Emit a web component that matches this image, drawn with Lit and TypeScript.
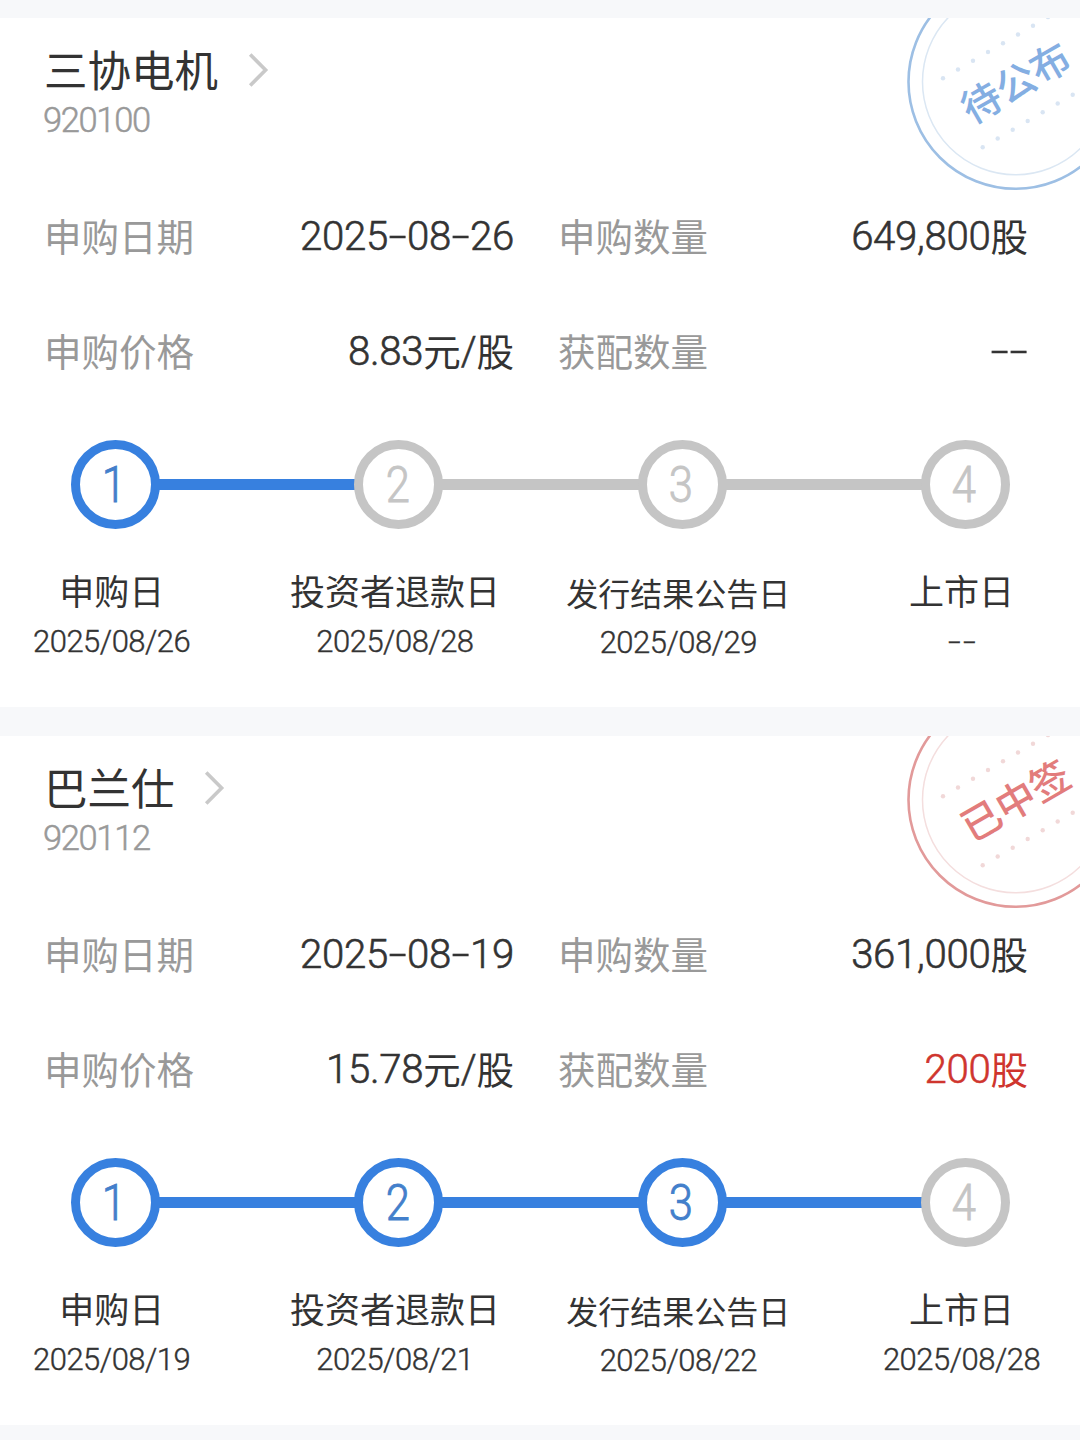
import { LitElement, html, css, svg } from "lit";
import { customElement, property } from "lit/decorators.js";
import { classMap } from "lit/directives/class-map.js";

interface Step {
  label: string;
  date: string;
  done: boolean;
}

interface Subscription {
  name: string;
  code: string;
  status: string;
  tone: "blue" | "red";
  date: string;
  amount: string;
  price: string;
  allotted: string;
  won: boolean;
  steps: Step[];
}

const ITEMS: Subscription[] = [
  {
    name: "三协电机",
    code: "920100",
    status: "待公布",
    tone: "blue",
    date: "2025-08-26",
    amount: "649,800股",
    price: "8.83元/股",
    allotted: "--",
    won: false,
    steps: [
      { label: "申购日", date: "2025/08/26", done: true },
      { label: "投资者退款日", date: "2025/08/28", done: false },
      { label: "发行结果公告日", date: "2025/08/29", done: false },
      { label: "上市日", date: "--", done: false },
    ],
  },
  {
    name: "巴兰仕",
    code: "920112",
    status: "已中签",
    tone: "red",
    date: "2025-08-19",
    amount: "361,000股",
    price: "15.78元/股",
    allotted: "200股",
    won: true,
    steps: [
      { label: "申购日", date: "2025/08/19", done: true },
      { label: "投资者退款日", date: "2025/08/21", done: true },
      { label: "发行结果公告日", date: "2025/08/22", done: true },
      { label: "上市日", date: "2025/08/28", done: false },
    ],
  },
];

// Hyphens are drawn wider than the font's own glyph.
const dashed = (text: string) =>
  text.split(/(-)/).filter(Boolean).map((part) => (part === "-" ? html`<span class="dash">-</span>` : part));

@customElement("status-stamp")
export class StatusStamp extends LitElement {
  @property() text = "";
  @property() tone = "blue";

  static styles = css`
    :host { display: block; width: 180px; height: 180px; overflow: hidden; }
    svg { display: block; }
    .blue { --line: #9dbfe4; --thin: #dbe7f3; --dot: #d9e5f3; --ink: #84aee2; }
    .red { --line: #e29a9a; --thin: #f4dede; --dot: #f1d8d8; --ink: #e27c7c; }
    .outer { fill: none; stroke: var(--line); stroke-width: 2.6; }
    .inner { fill: none; stroke: var(--thin); stroke-width: 1.5; }
    .dot { fill: var(--dot); }
    .word {
      fill: var(--ink);
      font: 500 39.5px/1 "Noto Sans CJK SC", sans-serif;
      text-anchor: middle;
    }
  `;

  private dots(x: number, y: number, count: number) {
    return Array.from({ length: count }, (_, i) =>
      svg`<circle class="dot" cx=${x + i * 15} cy=${y - i * 8.75} r="2.2"></circle>`);
  }

  render() {
    return html`<svg class=${this.tone} width="180" height="180" viewBox="0 0 180 180">
      <circle class="outer" cx="115.5" cy="63.8" r="107"></circle>
      <circle class="inner" cx="115.5" cy="63.8" r="93"></circle>
      ${this.dots(43, 60.3, 9)}
      ${this.dots(82.7, 129.3, 8)}
      <text class="word" transform="translate(115.5 64.5) rotate(-30)" x="0" y="15">${this.text}</text>
    </svg>`;
  }
}

@customElement("step-track")
export class StepTrack extends LitElement {
  @property({ attribute: false }) steps: Step[] = [];

  static styles = css`
    :host { display: block; }
    .track { display: flex; align-items: center; padding: 0 70px 0 71px; }
    .node {
      box-sizing: border-box; width: 89px; height: 89px; flex: none;
      border: 9px solid #c5c5c5; border-radius: 50%;
      display: flex; align-items: center; justify-content: center;
      font-size: 49.5px; line-height: 71px; font-weight: 300; color: #c5c5c5;
      -webkit-text-stroke: 0.9px currentColor;
    }
    .digit { transform: scaleX(0.88); padding: 2px 3px 0 0; }
    .node.done { border-color: #3780df; color: #437fcb; }
    .line { flex: 1; height: 11px; margin: 0 -2px; background: #c5c5c5; }
    .line.done { background: #3780df; }
    .captions {
      display: grid; grid-template-columns: repeat(4, 283.3px);
      margin: 40px 0 0 -30px; text-align: center; color: #333;
    }
    .label { font-size: 35px; line-height: 50px; white-space: nowrap; }
    .label.long { font-size: 32px; padding-top: 2px; line-height: 48px; }
    .date {
      margin-top: -2px; font-size: 31px; line-height: 50px; letter-spacing: -0.5px;
      font-weight: 300; -webkit-text-stroke: 0.4px currentColor;
    }
    .long + .date { padding-top: 1px; }
    .dash { display: inline-block; width: 15px; transform: scaleX(1.45); letter-spacing: 0; }
  `;

  render() {
    return html`
      <div class="track">
        ${this.steps.map((s, i) => html`
          ${i ? html`<div class=${classMap({ line: true, done: this.steps[i - 1].done })}></div>` : ""}
          <div class=${classMap({ node: true, done: s.done })}><span class="digit">${i + 1}</span></div>`)}
      </div>
      <div class="captions">
        ${this.steps.map((s) => html`<div>
          <div class=${classMap({ label: true, long: s.label.length > 6 })}>${s.label}</div>
          <div class="date">${dashed(s.date)}</div>
        </div>`)}
      </div>`;
  }
}

@customElement("subscription-card")
export class SubscriptionCard extends LitElement {
  @property({ attribute: false }) item!: Subscription;

  static styles = css`
    :host {
      display: block; position: relative; box-sizing: border-box;
      height: 689px; padding-top: 24px; overflow: hidden; background: #fff;
    }
    .head { padding-left: 44px; }
    .title { display: flex; align-items: center; gap: 29.5px; height: 56px; }
    .name { font-size: 43.5px; line-height: 56px; padding-top: 5px; color: #333; }
    .code {
      font-size: 34.5px; line-height: 44px; letter-spacing: -1.35px; margin-left: -1px;
      font-weight: 300; -webkit-text-stroke: 0.5px currentColor; color: #999;
    }
    .facts {
      display: grid; grid-template-columns: 470px 470px; column-gap: 44px; row-gap: 55px;
      padding: 65px 52px 58px 44px;
    }
    .fact { display: flex; justify-content: space-between; height: 60px; line-height: 60px; }
    .key { font-size: 37.5px; padding-top: 1px; color: #999; }
    .value {
      font-size: 40.2px; color: #333; letter-spacing: -0.3px;
      font-weight: 300; -webkit-text-stroke: 0.6px currentColor;
    }
    .unit { font-size: 37.5px; letter-spacing: 0; font-weight: 400; -webkit-text-stroke: 0; position: relative; top: 1px; }
    .won { color: #cf352e; }
    .dash { display: inline-block; width: 19px; text-align: center; transform: scaleX(1.6); }
    .stamp { position: absolute; top: 0; right: 0; }
  `;

  private fact(key: string, value: string, won = false) {
    const parts = value.split(/([元股])/).filter(Boolean);
    return html`<div class="fact">
      <span class="key">${key}</span>
      <span class=${classMap({ value: true, won })}>${parts.map((p) =>
        /[元股]/.test(p) ? html`<span class="unit">${p}</span>` : dashed(p))}</span>
    </div>`;
  }

  render() {
    const s = this.item;
    return html`
      <status-stamp class="stamp" text=${s.status} tone=${s.tone}></status-stamp>
      <div class="head">
        <div class="title">
          <span class="name">${s.name}</span>
          <svg width="22" height="36" viewBox="0 0 22 36" fill="none" stroke="#c9c9c9" stroke-width="3.6">
            <path d="M2.2 2.6 17.6 18 2.2 33.4"></path>
          </svg>
        </div>
        <div class="code">${s.code}</div>
      </div>
      <div class="facts">
        ${this.fact("申购日期", s.date)}
        ${this.fact("申购数量", s.amount)}
        ${this.fact("申购价格", s.price)}
        ${this.fact("获配数量", s.allotted, s.won)}
      </div>
      <step-track .steps=${s.steps}></step-track>`;
  }
}

@customElement("app-root")
export class AppRoot extends LitElement {
  static styles = css`
    :host {
      display: flex; flex-direction: column; gap: 29px; box-sizing: border-box;
      width: 1080px; height: 1440px; padding-top: 18px; overflow: hidden;
      background: #f7f8fa; font-family: Roboto, "Noto Sans CJK SC", sans-serif;
    }
    .card { flex: none; }
  `;

  render() {
    return ITEMS.map((item) => html`<subscription-card class="card" .item=${item}></subscription-card>`);
  }
}
